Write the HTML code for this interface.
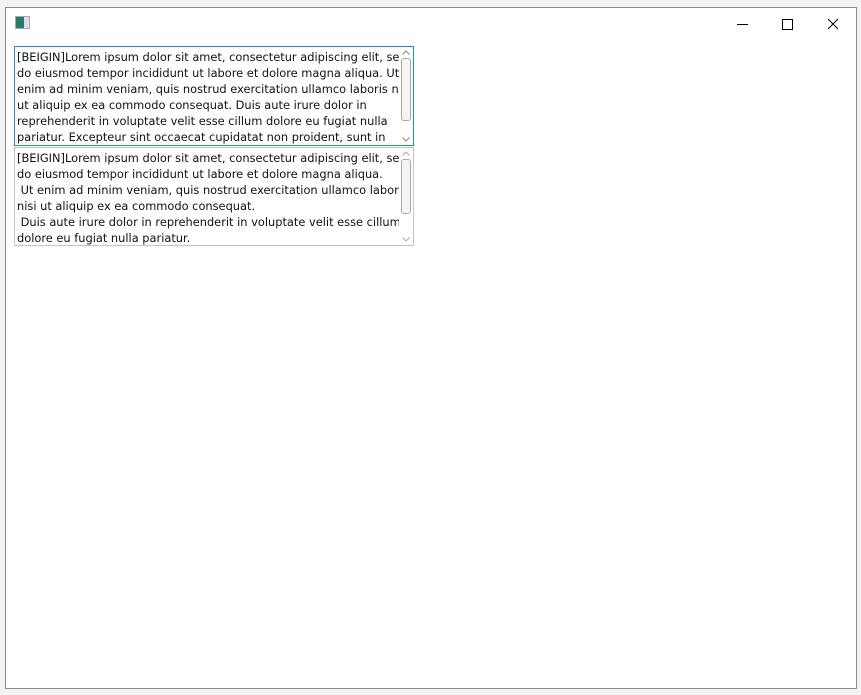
<!DOCTYPE html>
<html><head><style>
html,body{margin:0;padding:0;width:861px;height:695px;background:#f3f3f3;overflow:hidden;position:relative;font-family:"DejaVu Sans","Liberation Sans",sans-serif}
.win{position:absolute;left:5px;top:7px;width:850px;height:680px;background:#fff;border:1px solid #8a8a8a}
.ico{position:absolute;left:9px;top:8px;width:13px;height:11px;border:1px solid #aaa;background:linear-gradient(90deg,#2a7a6a 0 60%,#dde 60%)}
.tb{position:absolute;left:8px;width:398px;overflow:hidden;background:#fff}
.txt{position:absolute;left:2px;top:2px;font-size:11.4px;line-height:16px;color:#111;white-space:pre;width:384px;overflow:hidden}
.sb{position:absolute;right:0;top:0;bottom:0;width:14px;background:#fff}
.th{position:absolute;left:2px;width:8px;border:1px solid #a8a8a8;border-radius:3px;background:#f4f4f4}
.sb svg{position:absolute;left:3px}
</style></head><body>
<div class="win">
<div class="ico"></div>
<svg style="position:absolute;left:726px;top:8px" width="120" height="16">
<line x1="5" y1="8.5" x2="16" y2="8.5" stroke="#000"/>
<rect x="50.5" y="3.5" width="10" height="10" fill="none" stroke="#000"/>
<path d="M96 3L106 13M106 3L96 13" stroke="#000"/>
</svg>
<div class="tb" style="top:38px;height:98px;border:1px solid #1e90c8">
<div class="txt">[BEIGIN]Lorem ipsum dolor sit amet, consectetur adipiscing elit, sed
do eiusmod tempor incididunt ut labore et dolore magna aliqua. Ut
enim ad minim veniam, quis nostrud exercitation ullamco laboris nisi
ut aliquip ex ea commodo consequat. Duis aute irure dolor in
reprehenderit in voluptate velit esse cillum dolore eu fugiat nulla
pariatur. Excepteur sint occaecat cupidatat non proident, sunt in</div>
<div class="sb"><svg style="top:3px" width="8" height="5"><path d="M0.5 4.5L4 1L7.5 4.5" fill="none" stroke="#888"/></svg><div class="th" style="top:11px;height:61px"></div><svg style="bottom:3px" width="8" height="5"><path d="M0.5 0.5L4 4L7.5 0.5" fill="none" stroke="#888"/></svg></div>
</div>
<div class="tb" style="top:139px;height:97px;border:1px solid #c4c4c4">
<div class="txt">[BEIGIN]Lorem ipsum dolor sit amet, consectetur adipiscing elit, sed
do eiusmod tempor incididunt ut labore et dolore magna aliqua.
 Ut enim ad minim veniam, quis nostrud exercitation ullamco laboris
nisi ut aliquip ex ea commodo consequat.
 Duis aute irure dolor in reprehenderit in voluptate velit esse cillum
dolore eu fugiat nulla pariatur.</div>
<div class="sb"><svg style="top:3px" width="8" height="5"><path d="M0.5 4.5L4 1L7.5 4.5" fill="none" stroke="#aaa"/></svg><div class="th" style="top:11px;height:53px"></div><svg style="bottom:3px" width="8" height="5"><path d="M0.5 0.5L4 4L7.5 0.5" fill="none" stroke="#aaa"/></svg></div>
</div>
</div>
</body></html>
